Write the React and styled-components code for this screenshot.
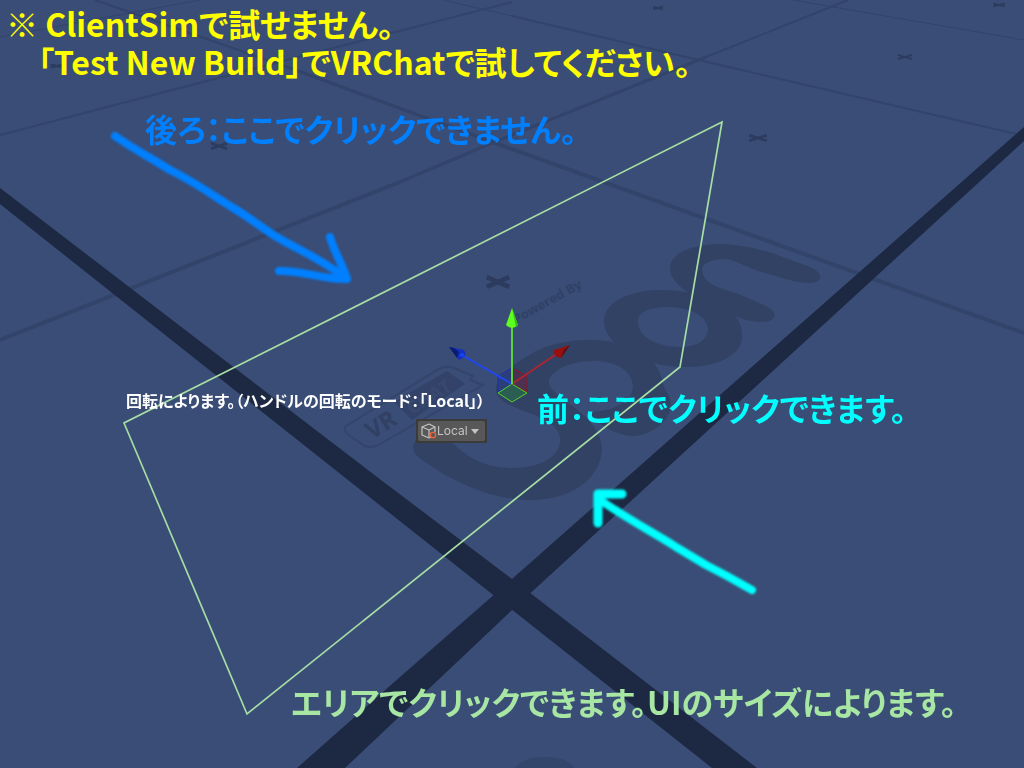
import React from "react";
import styled, { createGlobalStyle } from "styled-components";

const GlobalStyle = createGlobalStyle`
  * {
    box-sizing: border-box;
  }

  body {
    margin: 0;
    background: #3a4d76;
  }
`;

const SCENE = { width: 1024, height: 768 };

const Stage = styled.main`
  position: relative;
  min-height: 100vh;
  overflow: hidden;
  font-family: "Noto Sans CJK JP", sans-serif;
  font-feature-settings: "palt";
  font-weight: 700;
`;

const Backdrop = styled.svg`
  position: absolute;
  inset: 0;
  width: 100%;
  height: 100%;
`;

const Header = styled.header`
  position: relative;
  padding: 4px 6px;
  color: #ffff00;
`;

const Title = styled.h1`
  margin: 0;
  padding-left: ${({ $indent }) => ($indent ? "32px" : "0")};
  font-size: 32px;
  line-height: 38px;
  font-weight: 700;
`;

/* Pins an annotation to a point of the scene. */
const Pin = styled.div`
  position: absolute;
  left: ${({ $x }) => (($x / SCENE.width) * 100).toFixed(3)}%;
  top: ${({ $y }) => (($y / SCENE.height) * 100).toFixed(3)}%;
  white-space: nowrap;
`;

const Note = styled.p`
  margin: 0;
  color: ${({ $color }) => $color};
  font-size: ${({ $small }) => ($small ? "16px" : "32px")};
  line-height: 38px;
`;

const HandleMode = styled.label`
  position: relative;
  display: block;
  padding: 2px;
  background: #3b3b3b;
`;

const HandleSelect = styled.select`
  appearance: none;
  display: block;
  width: 67px;
  height: 20px;
  margin: 0;
  padding: 0 14px 0 19px;
  border: 0;
  border-radius: 2px;
  background: #585858;
  color: #c4c4c4;
  font: 400 12px/20px Inter, sans-serif;
`;

const HandleIcons = styled.svg`
  position: absolute;
  inset: 0;
  width: 100%;
  height: 100%;
  pointer-events: none;
`;

const FLOOR_MARKS = [
  [498, 282, 14, 7],
  [219, 146, 10, 4],
  [758, 138, 11, 4],
  [905, 57, 9, 3],
  [658, 8, 6, 2],
  [999, 5, 7, 2],
  [57, 66, 8, 2],
  [312, 12, 6, 2],
];

function FloorMark({ x, y, rx, ry }) {
  return (
    <path
      d={`M${x - rx * 0.8} ${y - ry * 0.7}L${x + rx * 0.8} ${y + ry * 0.7}M${x + rx * 0.8} ${y - ry * 0.7}L${x - rx * 0.8} ${y + ry * 0.7}`}
      stroke="#2c3b5e"
      strokeWidth={Math.max(2, ry * 0.65)}
    />
  );
}

function Floor() {
  return (
    <g fill="none">
      <g stroke="#33446b">
        <path d="M0 340L400 182" strokeWidth="4" />
        <path d="M400 182L492 143L706 57" strokeWidth="3" />
        <path d="M706 57L848 0" strokeWidth="2" />
        <path d="M95 0L290 68" strokeWidth="2" />
        <path d="M290 68L492 142" strokeWidth="3" />
        <path d="M492 142L1024 333" strokeWidth="4" />
        <path d="M0 135L287 60L512 2M512 16L699 60L1016 134" strokeWidth="2" />
        <path d="M0 37L200 0M443 0L512 16M793 0L1024 40" strokeWidth="1" />
      </g>
      {FLOOR_MARKS.map(([x, y, rx, ry]) => (
        <FloorMark key={`${x}-${y}`} x={x} y={y} rx={rx} ry={ry} />
      ))}
      <g fill="#1d2842">
        <path d="M0 188L381 480L512 579L757 768H712L348 480L0 204Z" />
        <path d="M1024 127L737 380L512 579L400 677L297 768H345L512 610L763 380L1024 141Z" />
      </g>
      <ellipse cx="545" cy="771" rx="30" ry="14" fill="#33446a" filter="url(#soft)" />
    </g>
  );
}

function FloorLogo() {
  return (
    <g>
      <g fill="#324265">
        <path d="M496 388C498 372 522 360 534 352C552 343 572 340 590 340C632 340 657 357 662 380C664 390 670 395 671 404C671 420 652 436 632 436C612 434 598 424 588 412C612 412 633 402 633 386C632 370 615 361 594 361C565 361 547 374 549 384C554 400 600 414 602 448C601 480 570 500 530 500C484 500 440 474 417 456C408 448 415 430 440 432C462 452 478 468 513 468C543 468 562 455 560 437C556 422 540 417 524 411C508 405 495 399 496 388Z" />
        <path
          fillRule="evenodd"
          d="M604 320C605 300 634 290 660 290C710 290 744 310 742 337C741 357 715 367 685 367C640 367 603 344 604 320ZM638 321C638 339 660 347 680 347C698 347 708 339 708 329C707 314 686 307 667 307C650 307 638 312 638 321Z"
        />
        <path d="M690 294C675 284 670 276 670 268C671 252 693 244 722 244C744 245 757 249 772 253L810 267C826 274 822 284 808 283C796 283 782 278 755 270C740 264 734 259 724 259C710 259 702 264 702 270C703 284 719 288 736 293L764 305C780 312 777 322 762 322C745 322 734 315 720 309Z" />
      </g>
      <g filter="url(#soft)">
        <path
          d="M346 426Q342 430 350 436L365 446Q372 449 380 444L483 385L470 380L473 376L454 368Q447 365 439 369Z"
          fill="none"
          stroke="#34456a"
          strokeWidth="2"
        />
        <path d="M394 402L447 371L465 384L412 420Z" fill="#334367" />
        <g fontFamily="Open Sans, sans-serif" fontWeight="700" fill="#304064">
          <text transform="translate(372 440) rotate(-32)" fontSize="24">VR</text>
          <text transform="translate(412 415) rotate(-32)" fontSize="18" fill="#394a71">CHAT</text>
          <text transform="translate(516 324) rotate(-29)" fontSize="13">Powered By</text>
        </g>
      </g>
    </g>
  );
}

function Gizmo() {
  return (
    <g strokeLinejoin="round">
      <path d="M498 376L512 368V384L498 392Z" fill="#203a9a" fillOpacity=".35" stroke="#1c2fae" />
      <path d="M512 368L527 376V392L512 384Z" fill="#6d2038" fillOpacity=".45" stroke="#8c1526" />
      <path d="M512 384L527 393L512 402L498 393Z" fill="#2a6350" fillOpacity=".85" stroke="#55cf27" />
      <path d="M512 384L462 355" stroke="#2048ee" strokeWidth="2" />
      <path d="M512 384L558 353" stroke="#a62632" strokeWidth="2" />
      <path d="M512 384V326" stroke="#5ad540" strokeWidth="2" />
      <path d="M449 347L464 350Q468 356 459 360Z" fill="#1130c4" />
      <path d="M449 347L457 358L459 352L454 348Z" fill="#0b1d73" />
      <circle cx="462" cy="355" r="2" fill="#1c46ef" />
      <path d="M570 345L554 350Q553 357 561 358Z" fill="#98100f" />
      <path d="M570 345L561 358L564 350Z" fill="#4d1017" />
      <path d="M512 308L506 325Q512 331 518 325Z" fill="#5cff1d" />
      <path d="M512 308L518 325L516 327Z" fill="#37b91a" />
    </g>
  );
}

function Arrows() {
  return (
    <g fill="none" strokeLinecap="round" strokeLinejoin="round" filter="url(#brush)">
      <g stroke="#0080ff" strokeWidth="8">
        <path d="M115 136C132 148 151 158 170 170C195 182 215 197 235 209C255 221 268 233 282 240C299 250 316 256 346 278" />
        <path d="M330 237C334 252 342 263 347 279C323 280 302 270 279 271" />
      </g>
      <g stroke="#00ffff" strokeWidth="8">
        <path d="M752 590L727 576L706 565L676 547C658 535 637 525 600 500" />
        <path d="M622 494H598V523" strokeWidth="9" />
      </g>
    </g>
  );
}

function Scene() {
  return (
    <Backdrop
      viewBox={`0 0 ${SCENE.width} ${SCENE.height}`}
      preserveAspectRatio="none"
      aria-hidden="true"
    >
      <defs>
        <filter id="soft">
          <feGaussianBlur stdDeviation="0.7" />
        </filter>
        <filter id="brush">
          <feGaussianBlur stdDeviation="0.8" />
        </filter>
      </defs>
      <Floor />
      <FloorLogo />
      <path
        d="M722 122L680 367L247 714L124 423Z"
        fill="none"
        stroke="#a6dda4"
        strokeWidth="1.7"
      />
      <Gizmo />
      <Arrows />
    </Backdrop>
  );
}

function HandleModePicker() {
  return (
    <HandleMode>
      <HandleSelect aria-label="ハンドルの回転" defaultValue="local">
        <option value="local">Local</option>
      </HandleSelect>
      <HandleIcons viewBox="0 0 71 24" fill="none" aria-hidden="true">
        <path
          d="M15 18L13 19L6 16V8L13 5L19 8V13M6 8L13 11L19 8M13 11V18"
          stroke="#c4c4c4"
          strokeLinejoin="round"
          strokeWidth="1.2"
        />
        <circle cx="17" cy="16" r="2.7" fill="#585858" stroke="#f0643c" strokeWidth="1.3" />
        <path d="M55 10H63L59 15Z" fill="#c4c4c4" />
      </HandleIcons>
    </HandleMode>
  );
}

const NOTES = [
  { x: 145, y: 109, color: "#0080ff", text: "後ろ：ここでクリックできません。" },
  { x: 126, y: 381, color: "#ffffff", text: "回転によります。（ハンドルの回転のモード：「Local」）", small: true },
  { x: 537, y: 388, color: "#00ffff", text: "前：ここでクリックできます。" },
  { x: 291, y: 682, color: "#a8e6a3", text: "エリアでクリックできます。UIのサイズによります。" },
];

export default function App() {
  return (
    <Stage>
      <GlobalStyle />
      <Scene />
      <Header>
        <Title>※ ClientSimで試せません。</Title>
        <Title as="p" $indent>「Test New Build」でVRChatで試してください。</Title>
      </Header>
      {NOTES.map(({ x, y, color, text, small }) => (
        <Pin key={text} $x={x} $y={y}>
          <Note $color={color} $small={small}>{text}</Note>
        </Pin>
      ))}
      <Pin $x={416} $y={419}>
        <HandleModePicker />
      </Pin>
    </Stage>
  );
}
